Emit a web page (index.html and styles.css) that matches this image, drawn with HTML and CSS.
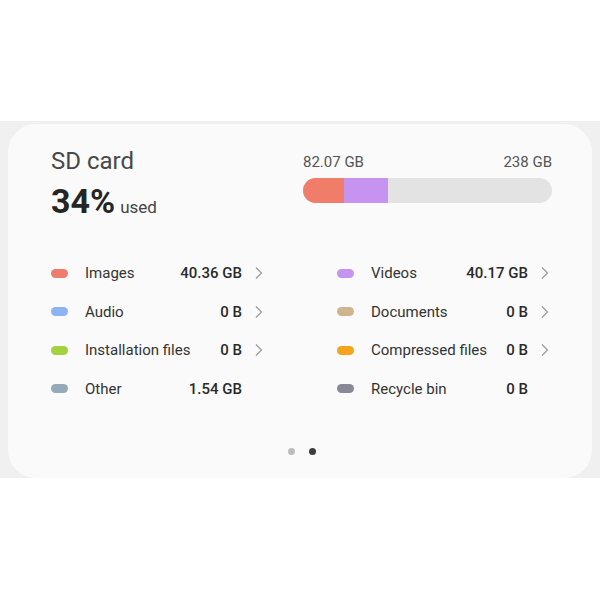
FILE: index.html
```html
<!DOCTYPE html>
<html>
<head>
<meta charset="utf-8">
<link rel="stylesheet" href="styles.css">
</head>
<body>
<div class="top"></div>
<div class="band">
  <div class="card">
    <div class="header">
      <div class="summary">
        <div class="title">SD card</div>
        <div class="usage"><span class="pct">34%</span><span class="used">used</span></div>
      </div>
      <div class="capacity">
        <div class="cap-labels"><span>82.07 GB</span><span>238 GB</span></div>
        <div class="bar">
          <div class="seg seg-images"></div>
          <div class="seg seg-videos"></div>
        </div>
      </div>
    </div>
    <div class="legend">
      <div class="item"><span class="dot c-images"></span><span class="label">Images</span><span class="value">40.36 GB</span><svg class="chev" viewBox="0 0 8 14"><path d="M1 1.5 L6.5 7 L1 12.5"/></svg></div>
      <div class="item"><span class="dot c-videos"></span><span class="label">Videos</span><span class="value">40.17 GB</span><svg class="chev" viewBox="0 0 8 14"><path d="M1 1.5 L6.5 7 L1 12.5"/></svg></div>
      <div class="item"><span class="dot c-audio"></span><span class="label">Audio</span><span class="value">0 B</span><svg class="chev" viewBox="0 0 8 14"><path d="M1 1.5 L6.5 7 L1 12.5"/></svg></div>
      <div class="item"><span class="dot c-docs"></span><span class="label">Documents</span><span class="value">0 B</span><svg class="chev" viewBox="0 0 8 14"><path d="M1 1.5 L6.5 7 L1 12.5"/></svg></div>
      <div class="item"><span class="dot c-install"></span><span class="label">Installation files</span><span class="value">0 B</span><svg class="chev" viewBox="0 0 8 14"><path d="M1 1.5 L6.5 7 L1 12.5"/></svg></div>
      <div class="item"><span class="dot c-compressed"></span><span class="label">Compressed files</span><span class="value">0 B</span><svg class="chev" viewBox="0 0 8 14"><path d="M1 1.5 L6.5 7 L1 12.5"/></svg></div>
      <div class="item"><span class="dot c-other"></span><span class="label">Other</span><span class="value">1.54 GB</span><span class="chev-space"></span></div>
      <div class="item"><span class="dot c-recycle"></span><span class="label">Recycle bin</span><span class="value">0 B</span><span class="chev-space"></span></div>
    </div>
    <div class="pager">
      <span class="pdot"></span>
      <span class="pdot active"></span>
    </div>
  </div>
</div>
</body>
</html>
```

FILE: styles.css
```css
html, body {
  margin: 0;
  padding: 0;
  background: #ffffff;
  font-family: Roboto, "Liberation Sans", sans-serif;
}
.top {
  height: 121px;
}
.band {
  height: 357px;
  background: #f0f0f0;
  padding: 3px 8px 0 8px;
  box-sizing: border-box;
  overflow: hidden;
}
.card {
  height: 354px;
  background: #fafafa;
  border-radius: 28px;
  padding: 23px 40px 0 43px;
  box-sizing: border-box;
}
.header {
  display: flex;
  justify-content: space-between;
}
.title {
  font-size: 24px;
  line-height: 28px;
  color: #484848;
}
.usage {
  margin-top: 6px;
  line-height: 40px;
  display: flex;
  align-items: baseline;
}
.pct {
  font-size: 34px;
  font-weight: 700;
  color: #252525;
}
.used {
  font-size: 17px;
  color: #444444;
  margin-left: 5px;
}
.capacity {
  width: 249px;
  margin-top: 5px;
}
.cap-labels {
  display: flex;
  justify-content: space-between;
  font-size: 15px;
  line-height: 20px;
  color: #555555;
}
.bar {
  margin-top: 6px;
  height: 25px;
  border-radius: 13px;
  background: #e3e3e3;
  display: flex;
  overflow: hidden;
}
.seg {
  height: 100%;
}
.seg-images {
  width: 41px;
  background: #f07c6a;
}
.seg-videos {
  width: 44px;
  background: #c793f0;
}
.legend {
  margin-top: 27px;
  display: grid;
  grid-template-columns: 212px 212px;
  column-gap: 74px;
}
.item {
  height: 38.5px;
  display: flex;
  align-items: center;
  font-size: 15px;
  color: #333333;
}
.dot {
  width: 17px;
  height: 9px;
  border-radius: 5px;
  margin-right: 17px;
}
.label {
  flex: 1;
}
.value {
  font-weight: 500;
  color: #2a2a2a;
}
.chev, .chev-space {
  width: 8px;
  height: 14px;
  margin-left: 13px;
  flex: none;
}
.chev path {
  fill: none;
  stroke: #9a9a9a;
  stroke-width: 1.2;
}
.c-images { background: #ef7b6e; }
.c-videos { background: #c593f0; }
.c-audio { background: #8db3f4; }
.c-docs { background: #cfb48d; }
.c-install { background: #a4d23c; }
.c-compressed { background: #f6a31b; }
.c-other { background: #94aab8; }
.c-recycle { background: #868a96; }
.pager {
  margin-top: 40px;
  display: flex;
  justify-content: center;
  gap: 14px;
  padding-left: 1px;
}
.pdot {
  width: 7px;
  height: 7px;
  border-radius: 50%;
  background: #bcbcbc;
}
.pdot.active {
  background: #3d3d3d;
}
```
